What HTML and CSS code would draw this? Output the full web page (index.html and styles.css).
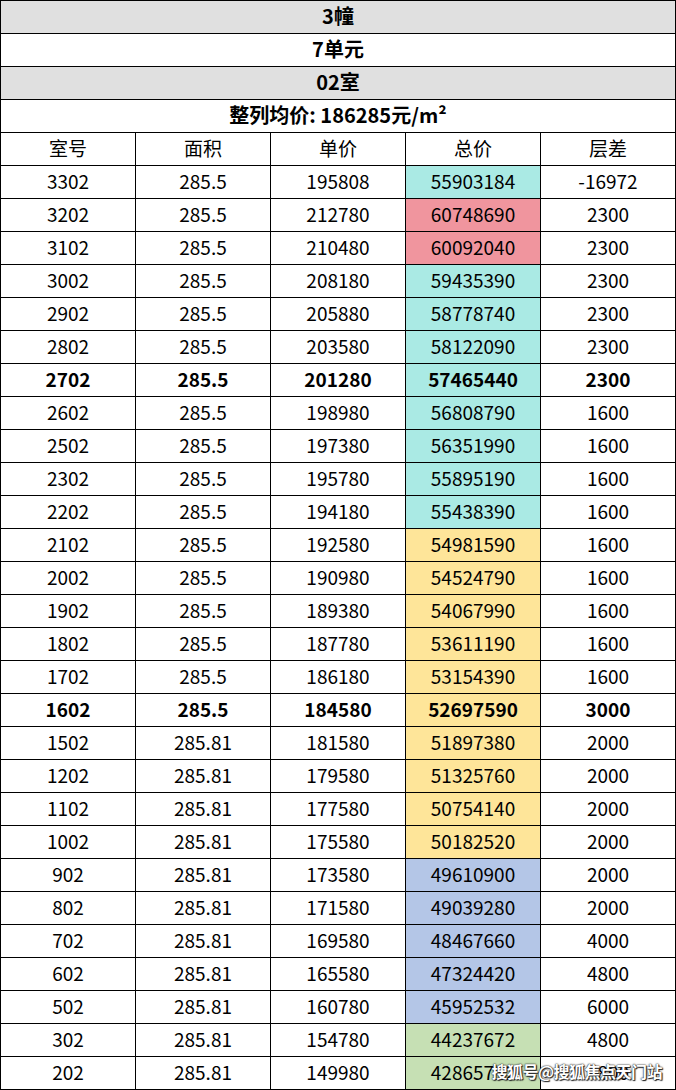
FILE: index.html
```html
<!DOCTYPE html>
<html lang="zh-CN">
<head>
<meta charset="utf-8">
<title>3幢 7单元 02室</title>
<link rel="stylesheet" href="styles.css">
</head>
<body>
<div class="sheet">
  <div class="grid">
    <div class="cell span gray bold">3幢</div>
    <div class="cell span bold">7单元</div>
    <div class="cell span gray bold">02室</div>
    <div class="cell span bold">整列均价: 186285元/m²</div>
    <div class="cell">室号</div><div class="cell">面积</div><div class="cell">单价</div><div class="cell">总价</div><div class="cell">层差</div>

    <div class="cell">3302</div><div class="cell">285.5</div><div class="cell">195808</div><div class="cell teal">55903184</div><div class="cell">-16972</div>
    <div class="cell">3202</div><div class="cell">285.5</div><div class="cell">212780</div><div class="cell pink">60748690</div><div class="cell">2300</div>
    <div class="cell">3102</div><div class="cell">285.5</div><div class="cell">210480</div><div class="cell pink">60092040</div><div class="cell">2300</div>
    <div class="cell">3002</div><div class="cell">285.5</div><div class="cell">208180</div><div class="cell teal">59435390</div><div class="cell">2300</div>
    <div class="cell">2902</div><div class="cell">285.5</div><div class="cell">205880</div><div class="cell teal">58778740</div><div class="cell">2300</div>
    <div class="cell">2802</div><div class="cell">285.5</div><div class="cell">203580</div><div class="cell teal">58122090</div><div class="cell">2300</div>
    <div class="cell bold">2702</div><div class="cell bold">285.5</div><div class="cell bold">201280</div><div class="cell teal bold">57465440</div><div class="cell bold">2300</div>
    <div class="cell">2602</div><div class="cell">285.5</div><div class="cell">198980</div><div class="cell teal">56808790</div><div class="cell">1600</div>
    <div class="cell">2502</div><div class="cell">285.5</div><div class="cell">197380</div><div class="cell teal">56351990</div><div class="cell">1600</div>
    <div class="cell">2302</div><div class="cell">285.5</div><div class="cell">195780</div><div class="cell teal">55895190</div><div class="cell">1600</div>
    <div class="cell">2202</div><div class="cell">285.5</div><div class="cell">194180</div><div class="cell teal">55438390</div><div class="cell">1600</div>
    <div class="cell">2102</div><div class="cell">285.5</div><div class="cell">192580</div><div class="cell yellow">54981590</div><div class="cell">1600</div>
    <div class="cell">2002</div><div class="cell">285.5</div><div class="cell">190980</div><div class="cell yellow">54524790</div><div class="cell">1600</div>
    <div class="cell">1902</div><div class="cell">285.5</div><div class="cell">189380</div><div class="cell yellow">54067990</div><div class="cell">1600</div>
    <div class="cell">1802</div><div class="cell">285.5</div><div class="cell">187780</div><div class="cell yellow">53611190</div><div class="cell">1600</div>
    <div class="cell">1702</div><div class="cell">285.5</div><div class="cell">186180</div><div class="cell yellow">53154390</div><div class="cell">1600</div>
    <div class="cell bold">1602</div><div class="cell bold">285.5</div><div class="cell bold">184580</div><div class="cell yellow bold">52697590</div><div class="cell bold">3000</div>
    <div class="cell">1502</div><div class="cell">285.81</div><div class="cell">181580</div><div class="cell yellow">51897380</div><div class="cell">2000</div>
    <div class="cell">1202</div><div class="cell">285.81</div><div class="cell">179580</div><div class="cell yellow">51325760</div><div class="cell">2000</div>
    <div class="cell">1102</div><div class="cell">285.81</div><div class="cell">177580</div><div class="cell yellow">50754140</div><div class="cell">2000</div>
    <div class="cell">1002</div><div class="cell">285.81</div><div class="cell">175580</div><div class="cell yellow">50182520</div><div class="cell">2000</div>
    <div class="cell">902</div><div class="cell">285.81</div><div class="cell">173580</div><div class="cell blue">49610900</div><div class="cell">2000</div>
    <div class="cell">802</div><div class="cell">285.81</div><div class="cell">171580</div><div class="cell blue">49039280</div><div class="cell">2000</div>
    <div class="cell">702</div><div class="cell">285.81</div><div class="cell">169580</div><div class="cell blue">48467660</div><div class="cell">4000</div>
    <div class="cell">602</div><div class="cell">285.81</div><div class="cell">165580</div><div class="cell blue">47324420</div><div class="cell">4800</div>
    <div class="cell">502</div><div class="cell">285.81</div><div class="cell">160780</div><div class="cell blue">45952532</div><div class="cell">6000</div>
    <div class="cell">302</div><div class="cell">285.81</div><div class="cell">154780</div><div class="cell green">44237672</div><div class="cell">4800</div>
    <div class="cell">202</div><div class="cell">285.81</div><div class="cell">149980</div><div class="cell green">42865712</div><div class="cell">4800</div>
  </div>
  <div class="watermark">搜狐号@搜狐焦点天门站</div>
</div>
</body>
</html>
```

FILE: styles.css
```css
html, body {
  margin: 0;
  padding: 0;
  background: #ffffff;
}

.sheet {
  position: relative;
  width: 676px;
  height: 1090px;
  overflow: hidden;
}

.grid {
  display: grid;
  grid-template-columns: repeat(5, 134px);
  grid-auto-rows: 32px;
  gap: 1px;
  padding: 1px;
  background: #000000;
  width: 676px;
  box-sizing: border-box;
}

.cell {
  background: #ffffff;
  display: flex;
  align-items: center;
  justify-content: center;
  padding-bottom: 3px;
  box-sizing: border-box;
  font-family: "Noto Sans CJK SC", "Noto Sans", sans-serif;
  font-size: 19px;
  color: #000000;
  line-height: 1;
  white-space: nowrap;
}

.span {
  grid-column: 1 / -1;
  font-size: 20px;
}
.bold { font-weight: 700; }
.gray { background: #e0e0e0; }
.teal { background: #aaeae4; }
.pink { background: #f0959e; }
.yellow { background: #fee599; }
.blue { background: #b4c6e7; }
.green { background: #c6e0b4; }

.watermark {
  position: absolute;
  right: 14px;
  bottom: 7px;
  font-family: "Noto Sans CJK SC", sans-serif;
  font-size: 16px;
  font-weight: 700;
  color: #ffffff;
  letter-spacing: -0.5px;
  text-shadow: 0 0 1px #222, 0 0 2px #222, 1px 1px 1px #222;
}
```
